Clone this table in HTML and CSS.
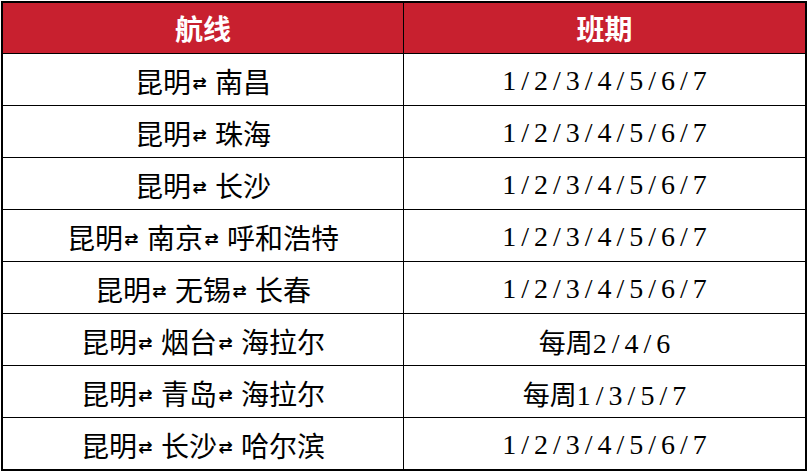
FILE: index.html
```html
<!DOCTYPE html>
<html lang="zh">
<head>
<meta charset="utf-8">
<link rel="stylesheet" href="styles.css">
</head>
<body>
<table class="routes">
  <thead>
    <tr><th>航线</th><th>班期</th></tr>
  </thead>
  <tbody>
    <tr><td>昆明<span class="arr">⇄</span> 南昌</td><td class="days">1/2/3/4/5/6/7</td></tr>
    <tr><td>昆明<span class="arr">⇄</span> 珠海</td><td class="days">1/2/3/4/5/6/7</td></tr>
    <tr><td>昆明<span class="arr">⇄</span> 长沙</td><td class="days">1/2/3/4/5/6/7</td></tr>
    <tr><td>昆明<span class="arr">⇄</span> 南京<span class="arr">⇄</span> 呼和浩特</td><td class="days">1/2/3/4/5/6/7</td></tr>
    <tr><td>昆明<span class="arr">⇄</span> 无锡<span class="arr">⇄</span> 长春</td><td class="days">1/2/3/4/5/6/7</td></tr>
    <tr><td>昆明<span class="arr">⇄</span> 烟台<span class="arr">⇄</span> 海拉尔</td><td class="days"><span class="wk">每周</span>2/4/6</td></tr>
    <tr><td>昆明<span class="arr">⇄</span> 青岛<span class="arr">⇄</span> 海拉尔</td><td class="days"><span class="wk">每周</span>1/3/5/7</td></tr>
    <tr><td>昆明<span class="arr">⇄</span> 长沙<span class="arr">⇄</span> 哈尔滨</td><td class="days">1/2/3/4/5/6/7</td></tr>
  </tbody>
</table>
</body>
</html>
```
FILE: styles.css
```css
html, body {
  margin: 0;
  padding: 0;
  background: #ffffff;
}
body {
  padding: 1px;
}
.routes {
  width: 806px;
  border: 2px solid #000;
  border-spacing: 0;
  table-layout: fixed;
  font-family: "Liberation Serif", "Noto Sans CJK SC", serif;
  color: #000;
}
.routes th,
.routes td {
  padding: 0;
  text-align: center;
  vertical-align: middle;
  border-bottom: 1px solid #000;
}
.routes th:first-child,
.routes td:first-child {
  border-right: 1px solid #000;
}
.routes th {
  height: 50px;
  background: #c8202f;
  color: #fff;
  font-family: "Noto Sans CJK SC", sans-serif;
  font-weight: 700;
  font-size: 28px;
}
.routes td {
  font-size: 28px;
  padding-top: 3px;
  height: 48px;
}
.routes tbody tr:last-child td {
  border-bottom: none;
}
.arr {
  display: inline-block;
  width: 17px;
  text-align: center;
  font-family: "DejaVu Sans", sans-serif;
  font-size: 17px;
  font-weight: 700;
  vertical-align: 4px;
}
.days {
  font-size: 31px;
  letter-spacing: 5px;
  text-indent: 5px;
}
.wk {
  font-size: 27px;
  letter-spacing: 0;
}
```
